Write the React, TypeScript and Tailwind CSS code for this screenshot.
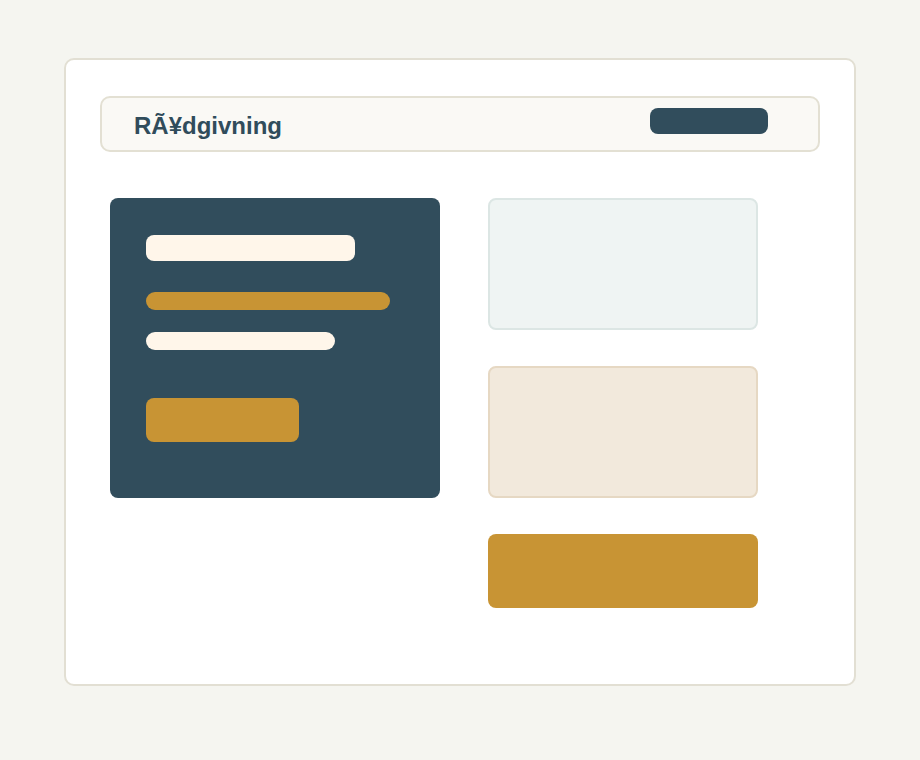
export default function App() {
  return (
    <div className="min-h-screen bg-[#f5f5f0] pt-[58px] pl-[64px]" style={{ fontFamily: '"Liberation Sans", Arial, sans-serif' }}>
      <div className="w-[792px] h-[628px] rounded-[10px] border-2 border-[#e2dfd3] bg-white pt-[36px] px-[34px]">
        {/* Top bar */}
        <header className="flex h-[56px] items-start rounded-[10px] border-2 border-[#e3e0d3] bg-[#faf9f5] pl-[32px] pr-[50px]">
          <span className="mt-[14px] text-[24px] font-bold leading-[28px] text-[#304c5b]">RÃ¥dgivning</span>
          <div className="flex-1" />
          <div className="mt-[10px] h-[26px] w-[118px] rounded-[8px] bg-[#314d5c]" />
        </header>

        <div className="mt-[46px] flex gap-[48px] pl-[10px]">
          {/* Hero panel */}
          <div className="h-[300px] w-[330px] rounded-[8px] bg-[#314d5c] pl-[36px] pt-[37px]">
            <div className="h-[26px] w-[209px] rounded-[8px] bg-[#fff6ea]" />
            <div className="mt-[31px] h-[18px] w-[244px] rounded-full bg-[#c89434]" />
            <div className="mt-[22px] h-[18px] w-[189px] rounded-full bg-[#fff6ea]" />
            <div className="mt-[48px] h-[44px] w-[153px] rounded-[8px] bg-[#c89434]" />
          </div>

          {/* Side cards */}
          <div className="flex w-[270px] flex-col gap-[36px]">
            <div className="h-[132px] rounded-[8px] border-2 border-[#dce6e4] bg-[#eff4f3]" />
            <div className="h-[132px] rounded-[8px] border-2 border-[#e6d8c3] bg-[#f2e9dc]" />
            <div className="h-[74px] rounded-[8px] bg-[#c89434]" />
          </div>
        </div>
      </div>
    </div>
  );
}
